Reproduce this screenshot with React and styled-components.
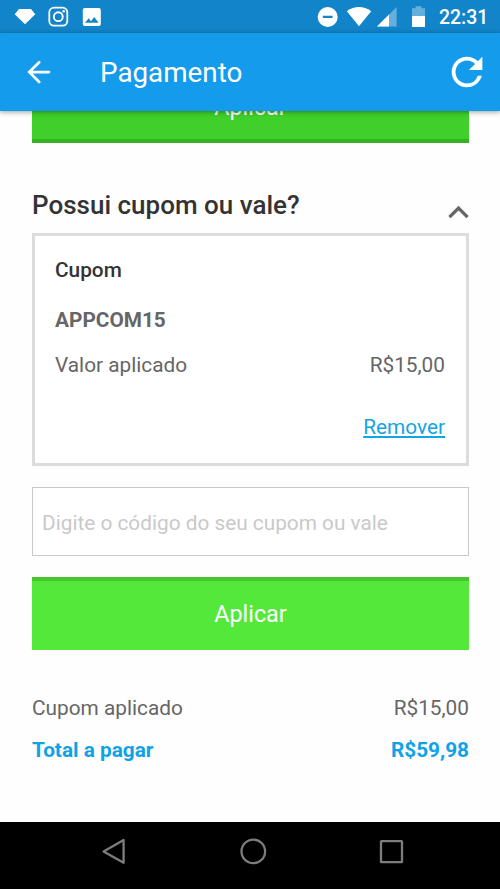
import { useState } from "react";
import { MdExpandLess, MdRefresh } from "react-icons/md";
import styled, { createGlobalStyle } from "styled-components";

const GlobalStyle = createGlobalStyle`
  * {
    box-sizing: border-box;
  }

  body {
    margin: 0;
    background-color: #fefefe;
    font-family: Roboto, "Noto Sans", sans-serif;
  }
`;

const Screen = styled.div`
  display: flex;
  flex-direction: column;
  width: 500px;
  height: 889px;
  overflow: hidden;
`;

const StatusBar = styled.div`
  display: flex;
  flex-shrink: 0;
  justify-content: space-between;
  height: 33px;
  padding: 0 0 0 14px;
  background-color: #1284c9;
`;

const StatusIcons = styled.div`
  display: flex;

  svg {
    display: block;
    fill: #fff;
  }
`;

const Clock = styled.span`
  width: 61px;
  color: #fff;
  font-size: 19.4px;
  font-weight: 500;
  line-height: 35px;
`;

const Header = styled.header`
  display: flex;
  flex-shrink: 0;
  align-items: center;
  height: 78px;
  padding: 0 10px 0 24px;
  background-color: #159bec;
  box-shadow: 0 1px 5px rgba(0, 0, 0, 0.4);
  z-index: 1;
`;

const IconButton = styled.button`
  display: flex;
  padding: 0;
  border: none;
  background: none;
  color: ${(props) => props.$color || "#fff"};
  cursor: pointer;
`;

const HeaderTitle = styled.h1`
  flex: 1;
  margin: 0 0 0 44px;
  padding-top: 2px;
  color: #fff;
  font-size: 27.8px;
  font-weight: 400;
  line-height: 76px;
`;

const Content = styled.main`
  flex: 1;
  min-height: 0;
  overflow: hidden;
  padding: 0 31px 0 32px;
`;

const ApplyButton = styled.button`
  display: block;
  width: 100%;
  height: 73px;
  padding: 0;
  border: none;
  border-top: ${(props) => (props.$pressed ? "4px solid #46c730" : "none")};
  border-bottom: ${(props) => (props.$pressed ? "none" : "4px solid #36b225")};
  background-color: ${(props) => (props.$pressed ? "#54e93a" : "#40d02a")};
  color: #fff;
  font-family: inherit;
  font-size: 23.3px;
  cursor: pointer;
  padding-bottom: ${(props) => (props.$pressed ? "3px" : "0")};
`;

const ScrolledButton = styled(ApplyButton)`
  margin-top: -41px;
  padding-top: 5px;
`;

const SectionHeader = styled.div`
  display: flex;
  justify-content: space-between;
  height: 40px;
  margin-top: 45px;
  margin-bottom: 5px;
`;

const SectionTitle = styled.h2`
  margin: 0;
  color: #333;
  font-size: 26px;
  font-weight: 500;
  line-height: 34px;
`;

const ToggleButton = styled(IconButton)`
  margin: 4px -10px 0 0;
`;

const CouponCard = styled.section`
  display: flex;
  flex-direction: column;
  height: 233px;
  padding: 21px 21px 0 20px;
  border: 3px solid #dcdcdc;
  background-color: #fff;
`;

const Text = styled.span`
  color: ${(props) => props.$color || "#666"};
  font-size: 20.8px;
  font-weight: ${(props) => props.$weight || 400};
  line-height: 26px;
`;

const Row = styled.div`
  display: flex;
  justify-content: space-between;
  margin-top: ${(props) => props.$top || "0"};
`;

const CouponCode = styled(Text)`
  margin-top: 24px;
`;

const RemoveLink = styled.a`
  align-self: flex-end;
  margin-top: 36px;
  color: #12a5e3;
  font-size: 20.8px;
  line-height: 26px;
  text-decoration: underline;
  cursor: pointer;
`;

const CouponInput = styled.input`
  display: block;
  width: 100%;
  height: 69px;
  margin: 21px 0;
  padding: 2px 9px 0;
  border: 1px solid #c8c8c8;
  border-radius: 0;
  background-color: #fff;
  color: #666;
  font-family: inherit;
  font-size: 20.8px;
  outline: none;

  &::placeholder {
    color: #c9c9c9;
  }
`;

const NavigationBar = styled.nav`
  display: flex;
  flex-shrink: 0;
  justify-content: space-between;
  height: 67px;
  padding: 14px 94px 0 98px;
  background-color: #000;

  svg {
    display: block;
    fill: none;
    stroke: #7d7d7d;
    stroke-width: 2.3;
  }
`;

function NotificationIcons() {
  return (
    <StatusIcons>
      <svg width="90" height="33" viewBox="14 0 90 33">
        <path d="M19 9h12l4.3 5.3L25 24.2 14.7 14.3z" />
        <path
          fillRule="evenodd"
          d="M54 6.8h8.6a5.6 5.6 0 0 1 5.6 5.6V21a5.6 5.6 0 0 1-5.6 5.6H54a5.6 5.6 0 0 1-5.6-5.6v-8.6A5.6 5.6 0 0 1 54 6.8zm0 1.8a3.8 3.8 0 0 0-3.8 3.8V21a3.8 3.8 0 0 0 3.8 3.8h8.6a3.8 3.8 0 0 0 3.8-3.8v-8.6a3.8 3.8 0 0 0-3.8-3.8z"
        />
        <path
          fillRule="evenodd"
          d="M58.3 11.3a5.4 5.4 0 1 1 0 10.8 5.4 5.4 0 0 1 0-10.8zm0 1.9a3.5 3.5 0 1 0 0 7 3.5 3.5 0 0 0 0-7z"
        />
        <circle cx="63.7" cy="11.3" r="1.3" />
        <path
          fillRule="evenodd"
          d="M84.8 8h14a2 2 0 0 1 2 2v14a2 2 0 0 1-2 2h-14a2 2 0 0 1-2-2V10a2 2 0 0 1 2-2zM85 22.7h13.6l-4.4-5.8-3.2 4.3-2.3-2.9z"
        />
      </svg>
    </StatusIcons>
  );
}

function SystemIcons() {
  return (
    <StatusIcons>
      <svg width="123" height="33" viewBox="316 0 123 33">
        <path
          fillRule="evenodd"
          d="M327.7 7a10 10 0 1 1 0 20 10 10 0 0 1 0-20zM322.8 15.7v2.4h9.8v-2.4z"
        />
        <path d="M346.8 11.2Q359 3 371.2 11.2L359 26.2z" />
        <path d="M396.6 7v19.6h-19.6z" opacity="0.35" />
        <path d="M389 14.6v12h-12z" />
        <path d="M415.5 6.3h6v2h3.5V16h-13V8.3h3.5z" opacity="0.35" />
        <path d="M412 16h13v11h-13z" />
      </svg>
      <Clock>22:31</Clock>
    </StatusIcons>
  );
}

export default function App() {
  const [coupon, setCoupon] = useState("");

  return (
    <Screen>
      <GlobalStyle />
      <StatusBar>
        <NotificationIcons />
        <SystemIcons />
      </StatusBar>

      <Header>
        <IconButton type="button" aria-label="Voltar">
          <svg
            width="32"
            height="32"
            viewBox="24 56 32 32"
            fill="none"
            stroke="currentColor"
            strokeWidth="2.7"
            strokeLinecap="round"
          >
            <path d="M49 72.1H30M39.2 62.2l-9.9 9.9 9.9 9.9" />
          </svg>
        </IconButton>
        <HeaderTitle>Pagamento</HeaderTitle>
        <IconButton type="button" aria-label="Atualizar">
          <MdRefresh size={46} />
        </IconButton>
      </Header>

      <Content>
        <ScrolledButton type="button">Aplicar</ScrolledButton>

        <SectionHeader>
          <SectionTitle>Possui cupom ou vale?</SectionTitle>
          <ToggleButton type="button" $color="#666" aria-label="Recolher">
            <MdExpandLess size={41} />
          </ToggleButton>
        </SectionHeader>

        <CouponCard>
          <Text $color="#333" $weight={500}>
            Cupom
          </Text>
          <CouponCode $weight={700}>APPCOM15</CouponCode>
          <Row $top="19px">
            <Text>Valor aplicado</Text>
            <Text>R$15,00</Text>
          </Row>
          <RemoveLink>Remover</RemoveLink>
        </CouponCard>

        <CouponInput
          type="text"
          placeholder="Digite o código do seu cupom ou vale"
          value={coupon}
          onChange={(e) => setCoupon(e.target.value)}
        />
        <ApplyButton type="button" $pressed>
          Aplicar
        </ApplyButton>

        <Row $top="45px">
          <Text>Cupom aplicado</Text>
          <Text>R$15,00</Text>
        </Row>
        <Row $top="16px">
          <Text $color="#0fa3e6" $weight={700}>
            Total a pagar
          </Text>
          <Text $color="#0fa3e6" $weight={700}>
            R$59,98
          </Text>
        </Row>
      </Content>

      <NavigationBar>
        <svg width="32" height="32" viewBox="98 836 32 32">
          <path d="M123.6 840v22.8l-20-11.4z" strokeLinejoin="round" />
        </svg>
        <svg width="32" height="32" viewBox="236 836 32 32">
          <circle cx="253.3" cy="851.4" r="11.8" />
        </svg>
        <svg width="32" height="32" viewBox="374 836 32 32">
          <rect x="381" y="841.2" width="21" height="21" rx="0.5" />
        </svg>
      </NavigationBar>
    </Screen>
  );
}
